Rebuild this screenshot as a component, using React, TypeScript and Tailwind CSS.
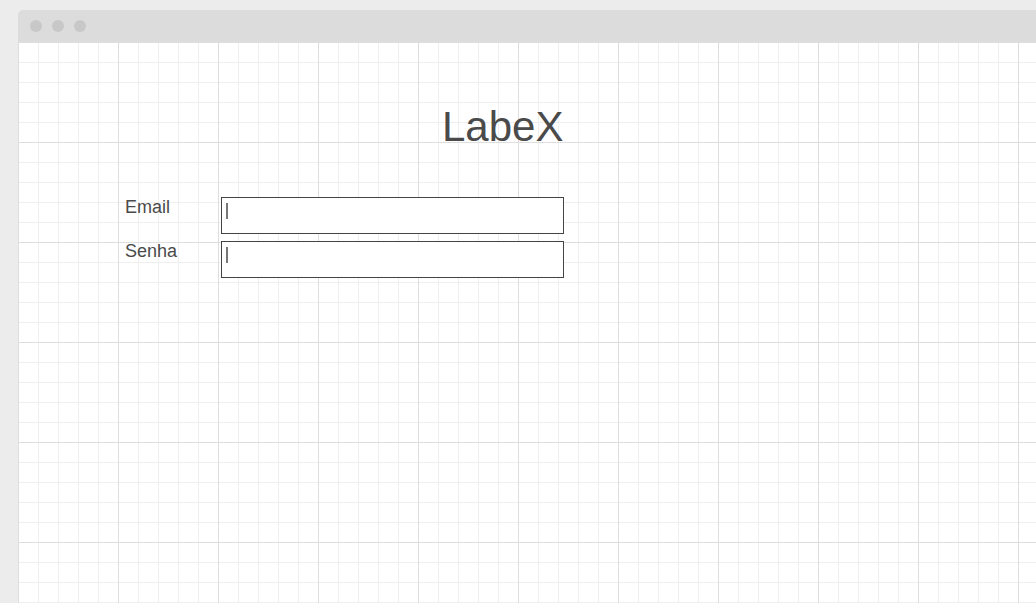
import React from 'react'

// grid sheet inside the mock window
const gridBg =
  'bg-white bg-[linear-gradient(to_right,#dedede_1px,transparent_1px),linear-gradient(to_bottom,#dedede_1px,transparent_1px),linear-gradient(to_right,#efefef_1px,transparent_1px),linear-gradient(to_bottom,#efefef_1px,transparent_1px)] bg-[size:100px_100px,100px_100px,20px_20px,20px_20px]'

function Field({ label }: { label: string }) {
  return (
    <div className="flex items-start">
      <span className="w-[97px] pl-[1px] pt-[1px] text-[18px] leading-none text-[#4a4a4a]">{label}</span>
      <div className="w-[343px] h-[37px] border border-[#444] bg-white pl-[4px] pt-[5px]">
        <div className="w-[2px] h-[16px] bg-[#777]" />
      </div>
    </div>
  )
}

export default function App() {
  return (
    <div
      className="w-[1036px] h-[603px] overflow-hidden bg-[#ececec] pl-[18px] pt-[10px]"
      style={{ fontFamily: '"Liberation Sans", Arial, sans-serif' }}
    >
      <div className="h-full flex flex-col rounded-tl-[5px] overflow-hidden">
        {/* title bar */}
        <div className="h-[32px] shrink-0 bg-[#dcdcdc] flex items-center gap-[10px] pl-[12px]">
          <span className="w-[12px] h-[12px] rounded-full bg-[#c8c8c8]" />
          <span className="w-[12px] h-[12px] rounded-full bg-[#c8c8c8]" />
          <span className="w-[12px] h-[12px] rounded-full bg-[#c8c8c8]" />
        </div>

        {/* canvas */}
        <div className={`flex-1 ${gridBg}`}>
          <h1 className="pl-[424px] pt-[64px] text-[42px] leading-none font-normal text-[#4a4a4a]">
            LabeX
          </h1>
          <div className="pl-[106px] pt-[49px] flex flex-col gap-[7px]">
            <Field label="Email" />
            <Field label="Senha" />
          </div>
        </div>
      </div>
    </div>
  )
}
